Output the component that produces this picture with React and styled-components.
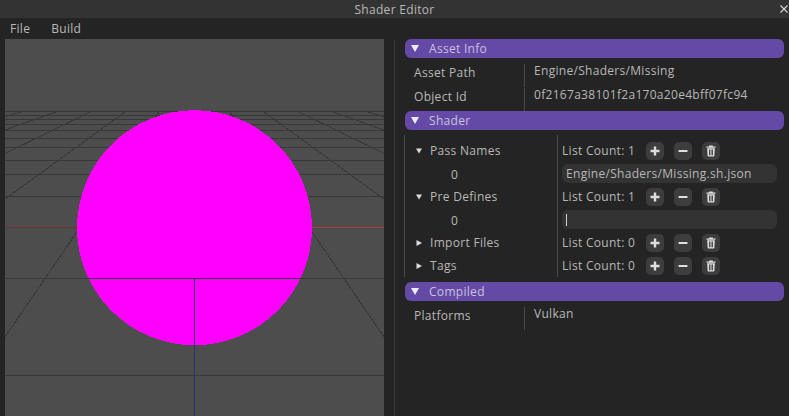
import React from 'react';
import styled, { createGlobalStyle } from 'styled-components';

const GlobalStyle = createGlobalStyle`
  html, body, #root {
    margin: 0;
    width: 100%;
    height: 100%;
    overflow: hidden;
    background: #242424;
  }
  * {
    box-sizing: border-box;
  }
`;

const Window = styled.div`
  width: 789px;
  height: 416px;
  display: flex;
  flex-direction: column;
  background: #242424;
  color: #b8b8b8;
  font-family: "Open Sans", "Noto Sans", sans-serif;
  font-size: 12px;
  letter-spacing: 0.3px;
  overflow: hidden;
`;

const TitleBar = styled.div`
  position: relative;
  flex: 0 0 18px;
  display: flex;
  align-items: center;
  justify-content: center;
  background: #333333;
`;

const CloseButton = styled.svg`
  position: absolute;
  right: 1px;
  top: 5px;
  width: 8px;
  height: 8px;
`;

const MenuBar = styled.div`
  flex: 0 0 21px;
  display: flex;
  align-items: center;
  gap: 21px;
  padding-left: 10px;
`;

const Body = styled.div`
  flex: 1;
  display: flex;
  min-height: 0;
`;

const ViewportPane = styled.div`
  flex: 0 0 379px;
  margin-left: 5px;
  background: #4d4d4d;
`;

const Scene = styled.svg`
  display: block;
  width: 379px;
  height: 377px;
`;

const Splitter = styled.div`
  flex: 0 0 1px;
  margin: 1px 0 0 10px;
  background: #3b3b3b;
`;

const Inspector = styled.div`
  flex: 0 0 379px;
  margin-left: 10px;
  display: flex;
  flex-direction: column;
`;

const SectionHeader = styled.div`
  flex: 0 0 19px;
  display: flex;
  align-items: center;
  gap: 10px;
  padding-left: 6px;
  border-radius: 6px;
  background: #6449a6;
  color: #c9c2de;
`;

const HeaderArrow = styled.svg`
  width: 8px;
  height: 7px;
  fill: #ececf4;
`;

const InfoTable = styled.div`
  padding-top: 6px;
  display: flex;
  flex-direction: column;
  gap: 1px;
`;

const InfoRow = styled.div`
  height: 23px;
  display: grid;
  grid-template-columns: 120px 1fr;
`;

const InfoLabel = styled.div`
  display: flex;
  align-items: center;
  padding: 0 0 6px 9px;
  border-right: 1px solid #4a4a4a;
`;

const InfoValue = styled.div`
  padding-left: 9px;
  line-height: 13px;
`;

const PropertyTable = styled.div`
  display: flex;
  margin: 5px 0 5px -1px;
  height: 142px;
`;

const NameColumn = styled.div`
  flex: 0 0 154px;
  padding-top: 4px;
  border-left: 1px solid #4a4a4a;
  border-right: 1px solid #4a4a4a;
`;

const ValueColumn = styled.div`
  flex: 1;
  padding: 4px 7px 0 4px;
`;

const NameRow = styled.div`
  height: 23px;
  display: flex;
  align-items: center;
  gap: 8px;
  padding: ${(p) => (p.$index ? '1px 0 0 46px' : '0 0 0 11px')};
`;

const TreeArrow = styled.svg`
  width: 6px;
  height: 6px;
  fill: #dcdcdc;
`;

const ValueRow = styled.div`
  height: 23px;
  display: flex;
  align-items: center;
`;

const CountLabel = styled.span`
  width: 84px;
`;

const IconButton = styled.button`
  width: 18px;
  height: 18px;
  margin: 1px 10px 0 0;
  padding: 0;
  border: none;
  border-radius: 5px;
  background: #3d3d3d;
  color: #dedede;
  display: flex;
  align-items: center;
  justify-content: center;
`;

const TextField = styled.div`
  width: 215px;
  height: 19px;
  display: flex;
  align-items: center;
  padding-left: 4px;
  border-radius: 6px;
  background: #333333;
  white-space: nowrap;
`;

const Caret = styled.span`
  width: 1px;
  height: 12px;
  background: #d0d0d0;
`;

const PlusIcon = () => (
  <svg width="10" height="10" viewBox="0 0 10 10" fill="currentColor">
    <path d="M3.8 0.5h2.4v3.3h3.3v2.4H6.2v3.3H3.8V6.2H0.5V3.8h3.3z" />
  </svg>
);

const MinusIcon = () => (
  <svg width="10" height="10" viewBox="0 0 10 10" fill="currentColor">
    <rect x="0.5" y="3.9" width="9" height="2.2" rx="0.6" />
  </svg>
);

const TrashIcon = () => (
  <svg width="10" height="12" viewBox="0 0 10 12" fill="currentColor">
    <path d="M3.4 0.4h3.2l0.5 1.1h2.4v1.2H0.5V1.5h2.4z" />
    <path fillRule="evenodd" d="M1.2 3.3h7.6l-0.4 7.3c0 0.6-0.4 1-1 1H2.6c-0.6 0-1-0.4-1-1zM3 4.6v5.6h0.9V4.6zM4.6 4.6v5.6h0.9V4.6zM6.1 4.6v5.6H7V4.6z" />
  </svg>
);

const ListControls = ({ count }) => (
  <ValueRow>
    <CountLabel>List Count: {count}</CountLabel>
    <IconButton><PlusIcon /></IconButton>
    <IconButton><MinusIcon /></IconButton>
    <IconButton><TrashIcon /></IconButton>
  </ValueRow>
);

const TreeName = ({ open, children }) => (
  <NameRow>
    <TreeArrow viewBox="0 0 6 6">
      <path d={open ? 'M0 0.5h6L3 5.5z' : 'M0.5 0L6 3 0.5 6z'} />
    </TreeArrow>
    {children}
  </NameRow>
);

const Section = ({ title }) => (
  <SectionHeader>
    <HeaderArrow viewBox="0 0 8 7">
      <path d="M0 0h8L4 7z" />
    </HeaderArrow>
    {title}
  </SectionHeader>
);

// horizontal grid lines, page y minus the 39px the pane starts at
const gridRows = [72.5, 76.5, 80.5, 85.5, 91.5, 99.5, 108.5, 121, 135, 157];
const gridSpokes = [
  [0, 77.5, 18, 72.5],
  [0, 91, 52, 72.5],
  [0, 114.5, 86, 72.5],
  [0, 160, 120, 73],
  [0, 298, 154, 73],
];

const Viewport = () => (
  <Scene viewBox="0 0 379 377">
    <g shapeRendering="crispEdges">
      {gridRows.map((y) => (
        <line key={y} x1="0" x2="379" y1={y} y2={y} stroke="#383838" />
      ))}
      {gridSpokes.map(([x1, y1, x2, y2]) => (
        <g key={y1} stroke="#383838">
          <line x1={x1} y1={y1} x2={x2} y2={y2} />
          <line x1={379 - x1} y1={y1} x2={379 - x2} y2={y2} />
        </g>
      ))}
      <line x1="0" x2="190" y1="188.5" y2="188.5" stroke="#6b3535" />
      <line x1="190" x2="379" y1="188.5" y2="188.5" stroke="#b03a3a" />
      <circle cx="189.5" cy="188.7" r="117.5" fill="#ff00ff" />
      <line x1="0" x2="379" y1="239.5" y2="239.5" stroke="#3a3a3a" />
      <line x1="0" x2="379" y1="336.5" y2="336.5" stroke="#383838" />
      <line x1="189.5" x2="189.5" y1="239" y2="306" stroke="#38306a" />
      <line x1="189.5" x2="189.5" y1="306" y2="377" stroke="#2f2f72" />
    </g>
  </Scene>
);

export default function App() {
  return (
    <Window>
      <GlobalStyle />
      <TitleBar>
        Shader Editor
        <CloseButton viewBox="0 0 8 8" stroke="#d8d8d8" strokeWidth="1.1">
          <path d="M0.5 0.5l7 7M7.5 0.5l-7 7" />
        </CloseButton>
      </TitleBar>
      <MenuBar>
        <span>File</span>
        <span>Build</span>
      </MenuBar>
      <Body>
        <ViewportPane>
          <Viewport />
        </ViewportPane>
        <Splitter />
        <Inspector>
          <Section title="Asset Info" />
          <InfoTable>
            <InfoRow>
              <InfoLabel>Asset Path</InfoLabel>
              <InfoValue>Engine/Shaders/Missing</InfoValue>
            </InfoRow>
            <InfoRow>
              <InfoLabel>Object Id</InfoLabel>
              <InfoValue>0f2167a38101f2a170a20e4bff07fc94</InfoValue>
            </InfoRow>
          </InfoTable>
          <Section title="Shader" />
          <PropertyTable>
            <NameColumn>
              <TreeName open>Pass Names</TreeName>
              <NameRow $index>0</NameRow>
              <TreeName open>Pre Defines</TreeName>
              <NameRow $index>0</NameRow>
              <TreeName>Import Files</TreeName>
              <TreeName>Tags</TreeName>
            </NameColumn>
            <ValueColumn>
              <ListControls count={1} />
              <ValueRow>
                <TextField>Engine/Shaders/Missing.sh.json</TextField>
              </ValueRow>
              <ListControls count={1} />
              <ValueRow>
                <TextField><Caret /></TextField>
              </ValueRow>
              <ListControls count={0} />
              <ListControls count={0} />
            </ValueColumn>
          </PropertyTable>
          <Section title="Compiled" />
          <InfoTable>
            <InfoRow>
              <InfoLabel>Platforms</InfoLabel>
              <InfoValue>Vulkan</InfoValue>
            </InfoRow>
          </InfoTable>
        </Inspector>
      </Body>
    </Window>
  );
}
